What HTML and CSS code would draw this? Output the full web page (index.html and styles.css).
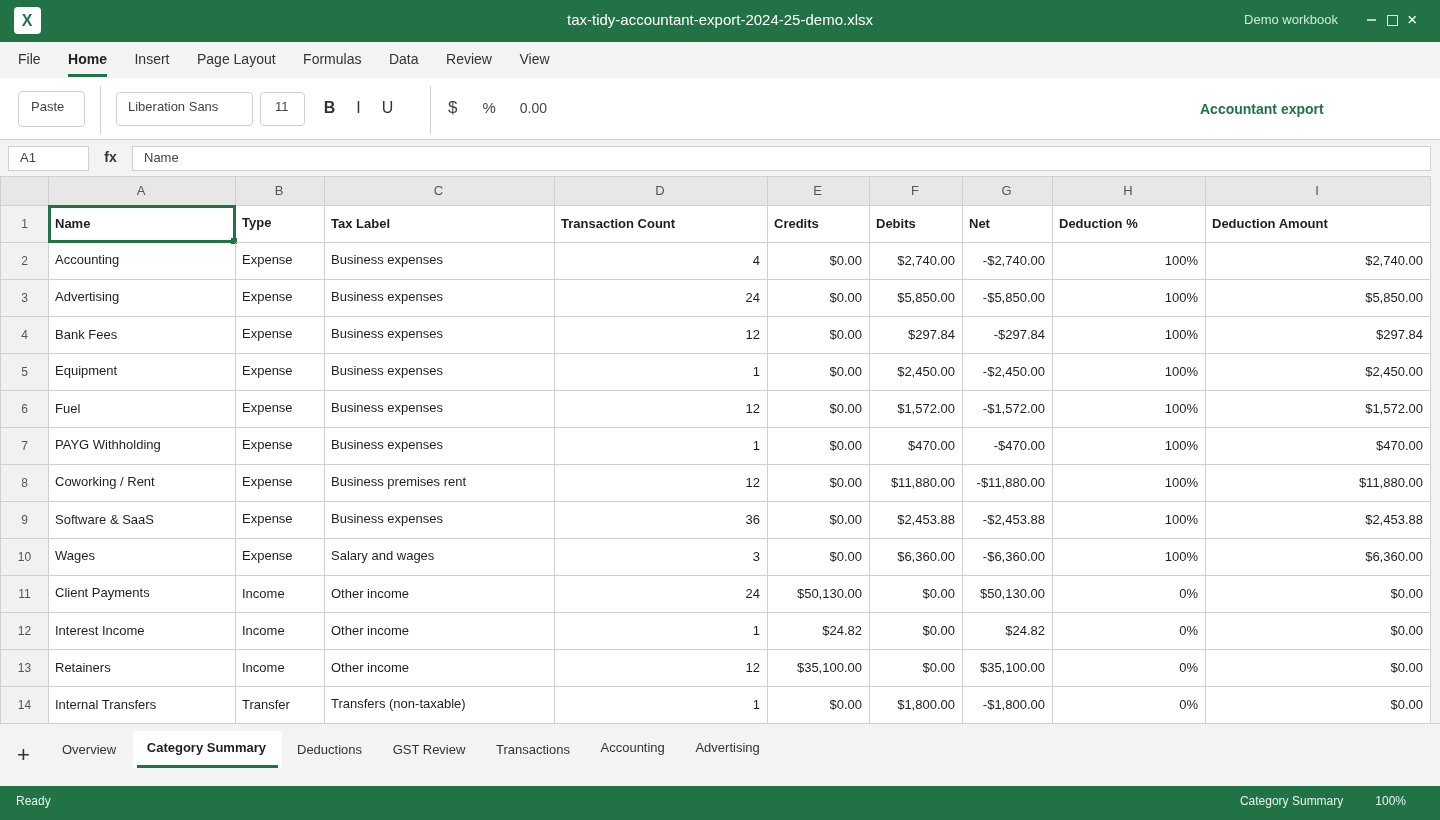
FILE: index.html
```html
<!DOCTYPE html>
<html lang="en">
<head>
    <meta charset="UTF-8">
    <title>tax-tidy-accountant-export-2024-25-demo.xlsx</title>
    <link rel="stylesheet" href="styles.css">
</head>
<body>
    <header class="titlebar">
        <div class="app-logo">X</div>
        <div class="file-name">tax-tidy-accountant-export-2024-25-demo.xlsx</div>
        <div class="title-right">
            <span class="workbook">Demo workbook</span>
            <svg class="win-icon" width="12" height="12" viewBox="0 0 12 12"><path d="M0 6h9" stroke="#fff" stroke-width="1.4" fill="none"/></svg>
            <svg class="win-icon" width="12" height="12" viewBox="0 0 12 12"><rect x="0.5" y="1.5" width="10" height="10" stroke="#e4f2ea" fill="none"/></svg>
            <svg class="win-icon" width="12" height="12" viewBox="0 0 12 12"><path d="M1.8 2.2l6.8 6.8M8.6 2.2l-6.8 6.8" stroke="#fff" stroke-width="1.3" fill="none"/></svg>
        </div>
    </header>

    <nav class="menu">
        <a>File</a>
        <a class="active">Home</a>
        <a>Insert</a>
        <a>Page Layout</a>
        <a>Formulas</a>
        <a>Data</a>
        <a>Review</a>
        <a>View</a>
    </nav>

    <section class="ribbon">
        <div class="box paste">Paste</div>
        <div class="divider"></div>
        <div class="box font-box">Liberation Sans</div>
        <div class="box size-box">11</div>
        <div class="format">
            <b>B</b>
            <span>I</span>
            <span>U</span>
        </div>
        <div class="divider second"></div>
        <div class="numbers">
            <span class="dollar">$</span>
            <span class="percent">%</span>
            <span class="decimals">0.00</span>
        </div>
        <div class="export-label">Accountant export</div>
    </section>

    <section class="formula-bar">
        <div class="name-box">A1</div>
        <div class="fx">fx</div>
        <div class="formula-input">Name</div>
    </section>

    <main class="sheet">
        <table>
            <colgroup>
                <col class="c-row">
                <col class="c-a">
                <col class="c-b">
                <col class="c-c">
                <col class="c-d">
                <col class="c-e">
                <col class="c-f">
                <col class="c-g">
                <col class="c-h">
                <col class="c-i">
            </colgroup>
            <thead>
                <tr>
                    <th class="corner"></th>
                    <th>A</th><th>B</th><th>C</th><th>D</th><th>E</th><th>F</th><th>G</th><th>H</th><th>I</th>
                </tr>
            </thead>
            <tbody>
                <tr class="head-row">
                    <td class="rn">1</td>
                    <td class="selected">Name<i class="handle"></i></td><td class="up">Type</td><td>Tax Label</td><td>Transaction Count</td><td>Credits</td><td>Debits</td><td>Net</td><td>Deduction %</td><td>Deduction Amount</td>
                </tr>
                <tr><td class="rn">2</td><td class="up">Accounting</td><td class="up">Expense</td><td class="up">Business expenses</td><td class="r">4</td><td class="r">$0.00</td><td class="r">$2,740.00</td><td class="r">-$2,740.00</td><td class="r">100%</td><td class="r">$2,740.00</td></tr>
                <tr><td class="rn">3</td><td class="up">Advertising</td><td class="up">Expense</td><td class="up">Business expenses</td><td class="r">24</td><td class="r">$0.00</td><td class="r">$5,850.00</td><td class="r">-$5,850.00</td><td class="r">100%</td><td class="r">$5,850.00</td></tr>
                <tr><td class="rn">4</td><td>Bank Fees</td><td class="up">Expense</td><td class="up">Business expenses</td><td class="r">12</td><td class="r">$0.00</td><td class="r">$297.84</td><td class="r">-$297.84</td><td class="r">100%</td><td class="r">$297.84</td></tr>
                <tr><td class="rn">5</td><td class="up">Equipment</td><td class="up">Expense</td><td class="up">Business expenses</td><td class="r">1</td><td class="r">$0.00</td><td class="r">$2,450.00</td><td class="r">-$2,450.00</td><td class="r">100%</td><td class="r">$2,450.00</td></tr>
                <tr><td class="rn">6</td><td>Fuel</td><td class="up">Expense</td><td class="up">Business expenses</td><td class="r">12</td><td class="r">$0.00</td><td class="r">$1,572.00</td><td class="r">-$1,572.00</td><td class="r">100%</td><td class="r">$1,572.00</td></tr>
                <tr><td class="rn">7</td><td class="up">PAYG Withholding</td><td class="up">Expense</td><td class="up">Business expenses</td><td class="r">1</td><td class="r">$0.00</td><td class="r">$470.00</td><td class="r">-$470.00</td><td class="r">100%</td><td class="r">$470.00</td></tr>
                <tr><td class="rn">8</td><td class="up">Coworking / Rent</td><td class="up">Expense</td><td class="up">Business premises rent</td><td class="r">12</td><td class="r">$0.00</td><td class="r">$11,880.00</td><td class="r">-$11,880.00</td><td class="r">100%</td><td class="r">$11,880.00</td></tr>
                <tr><td class="rn">9</td><td>Software &amp; SaaS</td><td class="up">Expense</td><td class="up">Business expenses</td><td class="r">36</td><td class="r">$0.00</td><td class="r">$2,453.88</td><td class="r">-$2,453.88</td><td class="r">100%</td><td class="r">$2,453.88</td></tr>
                <tr><td class="rn">10</td><td class="up">Wages</td><td class="up">Expense</td><td class="up">Salary and wages</td><td class="r">3</td><td class="r">$0.00</td><td class="r">$6,360.00</td><td class="r">-$6,360.00</td><td class="r">100%</td><td class="r">$6,360.00</td></tr>
                <tr><td class="rn">11</td><td class="up">Client Payments</td><td>Income</td><td>Other income</td><td class="r">24</td><td class="r">$50,130.00</td><td class="r">$0.00</td><td class="r">$50,130.00</td><td class="r">0%</td><td class="r">$0.00</td></tr>
                <tr><td class="rn">12</td><td>Interest Income</td><td>Income</td><td>Other income</td><td class="r">1</td><td class="r">$24.82</td><td class="r">$0.00</td><td class="r">$24.82</td><td class="r">0%</td><td class="r">$0.00</td></tr>
                <tr><td class="rn">13</td><td>Retainers</td><td>Income</td><td>Other income</td><td class="r">12</td><td class="r">$35,100.00</td><td class="r">$0.00</td><td class="r">$35,100.00</td><td class="r">0%</td><td class="r">$0.00</td></tr>
                <tr><td class="rn">14</td><td>Internal Transfers</td><td>Transfer</td><td class="up">Transfers (non-taxable)</td><td class="r">1</td><td class="r">$0.00</td><td class="r">$1,800.00</td><td class="r">-$1,800.00</td><td class="r">0%</td><td class="r">$0.00</td></tr>
            </tbody>
        </table>
    </main>

    <section class="tabs">
        <div class="add-sheet">+</div>
        <a class="tab">Overview</a>
        <a class="tab active">Category Summary</a>
        <a class="tab">Deductions</a>
        <a class="tab">GST Review</a>
        <a class="tab">Transactions</a>
        <a class="tab raised">Accounting</a>
        <a class="tab raised">Advertising</a>
    </section>

    <footer class="statusbar">
        <span>Ready</span>
        <span class="status-sheet">Category Summary</span>
        <span class="status-zoom">100%</span>
    </footer>
</body>
</html>
```

FILE: styles.css
```css
* {
    box-sizing: border-box;
}
html, body {
    margin: 0;
    padding: 0;
    height: 100%;
}
body {
    font-family: "Liberation Sans", Arial, sans-serif;
    font-size: 13px;
    color: #1f1f1f;
    background-color: #f3f3f3;
    overflow: hidden;
    display: flex;
    flex-direction: column;
    height: 820px;
    will-change: transform;
}

/* title bar */
.titlebar {
    height: 42px;
    background-color: #217346;
    color: white;
    display: flex;
    align-items: center;
    padding: 0 21px 2px 14px;
    position: relative;
    flex-shrink: 0;
}
.app-logo {
    width: 27px;
    height: 27px;
    background-color: white;
    color: #217346;
    border-radius: 4px;
    font-weight: bold;
    font-size: 16px;
    text-align: center;
    line-height: 27px;
    padding-right: 1px;
}
.file-name {
    position: absolute;
    left: 0;
    right: 0;
    top: 11px;
    text-align: center;
    font-size: 15px;
}
.title-right {
    margin-left: auto;
    display: flex;
    align-items: center;
}
.workbook {
    font-size: 13px;
    color: #cfe8d9;
    margin-right: 29px;
    padding-bottom: 1px;
}
.win-icon {
    margin-left: 8px;
}
.workbook + .win-icon {
    margin-left: 0;
}

/* menu */
.menu {
    height: 36px;
    background-color: #f3f3f3;
    display: flex;
    padding-left: 18px;
    gap: 27.5px;
    flex-shrink: 0;
}
.menu a {
    font-size: 14px;
    line-height: 35px;
    height: 35px;
    color: #333;
}
.menu a.active {
    font-weight: bold;
    color: #1f1f1f;
    border-bottom: 3px solid #217346;
}

/* ribbon */
.ribbon {
    height: 62px;
    background-color: white;
    border-bottom: 1px solid #d0d0d0;
    display: flex;
    align-items: flex-start;
    padding-left: 18px;
    position: relative;
    flex-shrink: 0;
}
.box {
    border: 1px solid #d0d0d0;
    border-radius: 4px;
    background-color: white;
    height: 34px;
    margin-top: 14px;
    padding: 6px 11px;
    color: #444;
}
.paste {
    width: 67px;
    height: 36px;
    margin-top: 13px;
    padding: 7px 12px;
}
.divider {
    width: 1px;
    height: 48px;
    margin: 8px 15px 0;
    background-color: #d0d0d0;
}
.font-box {
    width: 137px;
    margin-right: 7px;
}
.size-box {
    width: 45px;
    padding: 6px 14px;
}
.format {
    display: flex;
    font-size: 16px;
    color: #333;
    margin: 21px 0 0 10px;
    width: 87px;
}
.format b, .format span {
    width: 29px;
    text-align: center;
}
.divider.second {
    margin: 8px 0 0 28px;
}
.numbers {
    display: flex;
    align-items: baseline;
    font-size: 14px;
    color: #444;
    margin: 20px 0 0 17px;
}
.dollar {
    font-size: 17px;
    margin-right: 25px;
}
.percent {
    font-size: 15px;
    margin-right: 24px;
}
.export-label {
    position: absolute;
    left: 1200px;
    top: 23px;
    font-size: 14px;
    font-weight: bold;
    color: #217346;
}

/* formula bar */
.formula-bar {
    height: 36px;
    background-color: #f3f3f3;
    display: flex;
    align-items: center;
    padding: 0 9px 0 8px;
    flex-shrink: 0;
}
.name-box {
    width: 81px;
    height: 25px;
    background-color: white;
    border: 1px solid #d0d0d0;
    padding: 3px 11px;
    color: #444;
}
.fx {
    width: 43px;
    text-align: center;
    font-size: 14px;
    font-weight: bold;
    color: #333;
    padding-bottom: 2px;
}
.formula-input {
    flex: 1;
    height: 25px;
    background-color: white;
    border: 1px solid #d0d0d0;
    padding: 3px 11px;
    color: #444;
}

/* grid */
.sheet {
    flex: 1;
    background-color: #f3f3f3;
    border-bottom: 1px solid #d0d0d0;
    min-height: 0;
}
table {
    border-collapse: separate;
    border-spacing: 0;
    table-layout: fixed;
    width: 1431px;
    background-color: white;
}
.c-row { width: 49px; }
.c-a { width: 187px; }
.c-b { width: 89px; }
.c-c { width: 230px; }
.c-d { width: 213px; }
.c-e { width: 102px; }
.c-f { width: 93px; }
.c-g { width: 90px; }
.c-h { width: 153px; }
.c-i { width: 225px; }
th {
    height: 30px;
    background-color: #e7e7e7;
    border-top: 1px solid #d0d0d0;
    border-right: 1px solid #d0d0d0;
    border-bottom: 1px solid #d0d0d0;
    font-weight: normal;
    color: #555;
    padding: 0 2px 1px 0;
}
th.corner {
    border-left: 1px solid #d0d0d0;
}
td {
    height: 37px;
    border-right: 1px solid #d0d0d0;
    border-bottom: 1px solid #d0d0d0;
    padding: 0 6px 2px;
    white-space: nowrap;
    position: relative;
    color: #1f1f1f;
}
td.up {
    padding-bottom: 4px;
}
td.r {
    text-align: right;
    padding-right: 7px;
}
td.rn {
    background-color: #f1f1f1;
    border-left: 1px solid #d0d0d0;
    text-align: center;
    color: #555;
    font-size: 12px;
    padding: 0;
}
.head-row td:not(.rn) {
    font-weight: bold;
}
td.selected::before {
    content: "";
    position: absolute;
    top: -1px;
    left: -1px;
    right: -1px;
    bottom: -1px;
    border: 3px solid #217346;
}
.handle {
    position: absolute;
    right: -2px;
    bottom: -2px;
    width: 6px;
    height: 6px;
    background-color: #217346;
}

/* sheet tabs */
.tabs {
    height: 62px;
    background-color: #f3f3f3;
    display: flex;
    align-items: flex-start;
    flex-shrink: 0;
    padding-top: 7px;
}
.add-sheet {
    width: 47px;
    text-align: center;
    font-size: 22px;
    line-height: 34px;
    margin-top: 7px;
    color: #333;
}
.tab {
    height: 37px;
    line-height: 37px;
    padding: 0 15px;
    margin-right: 0.6px;
    color: #333;
}
.tab.raised {
    line-height: 34px;
}
.tab.active {
    position: relative;
    background-color: white;
    color: #1f1f1f;
    font-weight: bold;
    line-height: 34px;
    padding: 0 15.5px 0 14px;
    margin: 0 0.5px 0 1px;
}
.tab.active::after {
    content: "";
    position: absolute;
    left: 4px;
    right: 4px;
    bottom: 0;
    height: 3px;
    background-color: #217346;
}

/* status bar */
.statusbar {
    height: 34px;
    background-color: #217346;
    color: #e6f3eb;
    display: flex;
    align-items: center;
    font-size: 12px;
    padding: 0 34px 4px 16px;
    flex-shrink: 0;
}
.status-sheet {
    margin-left: auto;
}
.status-zoom {
    margin-left: 32px;
}
```
